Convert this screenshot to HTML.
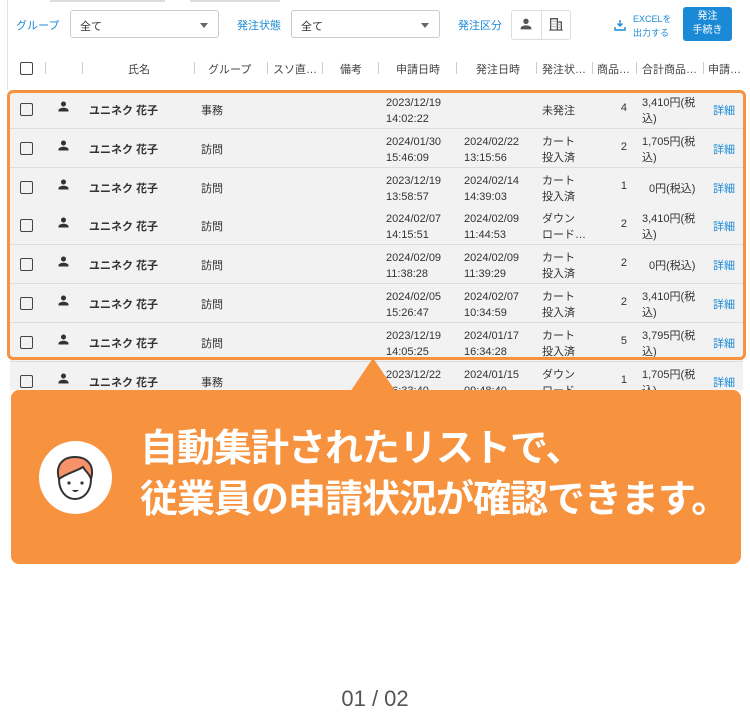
<!DOCTYPE html>
<html><head><meta charset="utf-8"><style>
*{margin:0;padding:0;box-sizing:border-box}
body{width:750px;height:721px;background:#fff;position:relative;overflow:hidden;font-family:"Liberation Sans","Noto Sans CJK JP",sans-serif;font-size:11px;color:#333}
.a{position:absolute;white-space:nowrap}
.blue{color:#1a8ad6}
.sel{position:absolute;border:1px solid #ccc;border-radius:3px;background:#fff;height:28px;top:10px;padding:7px 9px;font-size:11px}
.sel:after{content:"";position:absolute;right:10px;top:12px;border:4px solid transparent;border-top:5px solid #666}
.cb{position:absolute;width:13px;height:13px;border:1.5px solid #444;border-radius:2px}
.row{position:absolute;left:10px;width:733px;height:39px;background:#f2f2f2;border-bottom:1px solid #ddd}
.hd{position:absolute;top:61px;font-size:11px;color:#444}
.sep{position:absolute;top:62px;width:1px;height:12px;background:#ccc}
</style></head><body>
<div class="a" style="left:7px;top:0;width:1px;height:90px;background:#e4e4e4"></div>
<div class="a" style="left:50px;top:0;width:115px;height:2px;background:#ddd"></div>
<div class="a" style="left:190px;top:0;width:90px;height:2px;background:#ddd"></div>
<div class="a blue" style="left:16px;top:17px">グループ</div>
<div class="sel" style="left:70px;width:149px">全て</div>
<div class="a blue" style="left:237px;top:17px">発注状態</div>
<div class="sel" style="left:291px;width:149px">全て</div>
<div class="a blue" style="left:458px;top:17px">発注区分</div>
<div class="a" style="left:511px;top:10px;width:60px;height:30px;border:1px solid #ddd;border-radius:3px"></div>
<div class="a" style="left:541px;top:10px;width:1px;height:30px;background:#ddd"></div>
<svg class="a" style="left:518px;top:16px" width="16" height="16" viewBox="0 0 24 24"><path fill="#555" d="M12 12c2.2 0 4-1.8 4-4s-1.8-4-4-4-4 1.8-4 4 1.8 4 4 4zm0 2c-2.7 0-8 1.3-8 4v2h16v-2c0-2.7-5.3-4-8-4z"/></svg>
<svg class="a" style="left:548px;top:16px" width="16" height="16" viewBox="0 0 24 24"><path fill="none" stroke="#555" stroke-width="2" d="M4 21V4h10v17M14 9h6v12M2 21h20M7 8h1M10 8h1M7 12h1M10 12h1M7 16h1M10 16h1M16 13h1M16 17h1"/></svg>
<svg class="a" style="left:614px;top:19px" width="12" height="12" viewBox="0 0 12 12"><path fill="none" stroke="#1a8ad6" stroke-width="1.4" d="M6 1v6M3.5 4.5 6 7l2.5-2.5M1 8v3h10V8"/></svg>
<div class="a blue" style="left:633px;top:12px;font-size:9px;line-height:14px">EXCELを<br>出力する</div>
<div class="a" style="left:683px;top:7px;width:49px;height:34px;background:#1a8ad6;border-radius:3px;color:#fff;font-size:10px;line-height:14px;text-align:center;padding-top:3px">発注<br>手続き</div>
<div class="cb" style="left:20px;top:62px"></div>
<div class="sep" style="left:45px"></div><div class="sep" style="left:82px"></div>
<div class="hd" style="left:128px">氏名</div>
<div class="sep" style="left:194px"></div><div class="hd" style="left:208px">グループ</div>
<div class="sep" style="left:267px"></div><div class="hd" style="left:273px">スソ直…</div>
<div class="sep" style="left:322px"></div><div class="hd" style="left:340px">備考</div>
<div class="sep" style="left:378px"></div><div class="hd" style="left:396px">申請日時</div>
<div class="sep" style="left:456px"></div><div class="hd" style="left:476px">発注日時</div>
<div class="sep" style="left:536px"></div><div class="hd" style="left:542px">発注状…</div>
<div class="sep" style="left:592px"></div><div class="hd" style="left:597px">商品…</div>
<div class="sep" style="left:636px"></div><div class="hd" style="left:642px">合計商品…</div>
<div class="sep" style="left:703px"></div><div class="hd" style="left:708px">申請…</div>

<div id="rows"></div>
<script>
var d=[["事務","2023/12/19<br>14:02:22","","未発注","4","3,410円(税<br>込)"],
["訪問","2024/01/30<br>15:46:09","2024/02/22<br>13:15:56","カート<br>投入済","2","1,705円(税<br>込)"],
["訪問","2023/12/19<br>13:58:57","2024/02/14<br>14:39:03","カート<br>投入済","1","0円(税込)"],
["訪問","2024/02/07<br>14:15:51","2024/02/09<br>11:44:53","ダウン<br>ロード…","2","3,410円(税<br>込)"],
["訪問","2024/02/09<br>11:38:28","2024/02/09<br>11:39:29","カート<br>投入済","2","0円(税込)"],
["訪問","2024/02/05<br>15:26:47","2024/02/07<br>10:34:59","カート<br>投入済","2","3,410円(税<br>込)"],
["訪問","2023/12/19<br>14:05:25","2024/01/17<br>16:34:28","カート<br>投入済","5","3,795円(税<br>込)"],
["事務","2023/12/22<br>16:33:40","2024/01/15<br>09:48:40","ダウン<br>ロード…","1","1,705円(税<br>込)"]];
var h="";
d.forEach(function(r,i){var t=90+i*38.8,c=t+19;
h+='<div class="row" style="top:'+t+'px"></div>';
h+='<div class="cb" style="left:20px;top:'+(c-6)+'px"></div>';
h+='<svg class="a" style="left:56px;top:'+(c-10)+'px" width="15" height="15" viewBox="0 0 24 24"><path fill="#333" d="M12 12c2.2 0 4-1.8 4-4s-1.8-4-4-4-4 1.8-4 4 1.8 4 4 4zm0 2c-2.7 0-8 1.3-8 4v2h16v-2c0-2.7-5.3-4-8-4z"/></svg>';
h+='<div class="a" style="left:89px;top:'+(c-7)+'px;font-weight:bold">ユニネク 花子</div>';
h+='<div class="a" style="left:201px;top:'+(c-7)+'px">'+r[0]+'</div>';
h+='<div class="a" style="left:386px;top:'+(c-14)+'px;line-height:16px">'+r[1]+'</div>';
h+='<div class="a" style="left:464px;top:'+(c-14)+'px;line-height:16px">'+r[2]+'</div>';
if(r[3]=="未発注")h+='<div class="a" style="left:542px;top:'+(c-7)+'px">'+r[3]+'</div>';
else h+='<div class="a" style="left:542px;top:'+(c-14)+'px;line-height:16px">'+r[3]+'</div>';
h+='<div class="a" style="left:617px;width:10px;text-align:right;top:'+(c-7)+'px">'+r[4]+'</div>';
if(r[5]=="0円(税込)")h+='<div class="a" style="left:649px;top:'+(c-7)+'px">'+r[5]+'</div>';
else h+='<div class="a" style="left:642px;top:'+(c-14)+'px;line-height:16px">'+r[5]+'</div>';
h+='<div class="a blue" style="left:713px;top:'+(c-7)+'px">詳細</div>';});
document.getElementById("rows").innerHTML=h;
</script>
<div class="a" style="left:0;top:390px;width:750px;height:331px;background:#fff"></div>
<div class="a" style="left:7px;top:90px;width:739px;height:270px;border:3px solid #f7923f;border-radius:6px"></div>
<svg class="a" style="left:350px;top:358px" width="46" height="34"><path d="M23 0 L0 34 H46 Z" fill="#f7923f"/></svg>
<div class="a" style="left:11px;top:390px;width:730px;height:174px;background:#f7923f;border-radius:8px"></div>
<div class="a" style="left:39px;top:441px;width:73px;height:73px;border-radius:50%;background:#fff"></div>
<svg class="a" style="left:39px;top:441px" width="73" height="73" viewBox="0 0 73 73"><path d="M20 38c-4-14 4-22 16-22s20 8 16 22c-2-6-6-8-8-12-6 4-16 6-24 12z" fill="#f7926a" stroke="#333" stroke-width="2"/><path d="M20 38c0 12 7 20 16 20s16-8 16-20" fill="none" stroke="#333" stroke-width="2"/><circle cx="30" cy="42" r="1.6" fill="#333"/><circle cx="43" cy="42" r="1.6" fill="#333"/><path d="M33 49q3 4 7 0z" fill="#333"/></svg>
<div class="a" style="left:140px;top:424px;color:#fff;font-size:38px;font-weight:bold;line-height:51px;letter-spacing:-1px">自動集計されたリストで、<br>従業員の申請状況が確認できます。</div>
<div class="a" style="left:0;width:750px;text-align:center;top:686px;font-size:22px;color:#555">01 / 02</div>
</body></html>
